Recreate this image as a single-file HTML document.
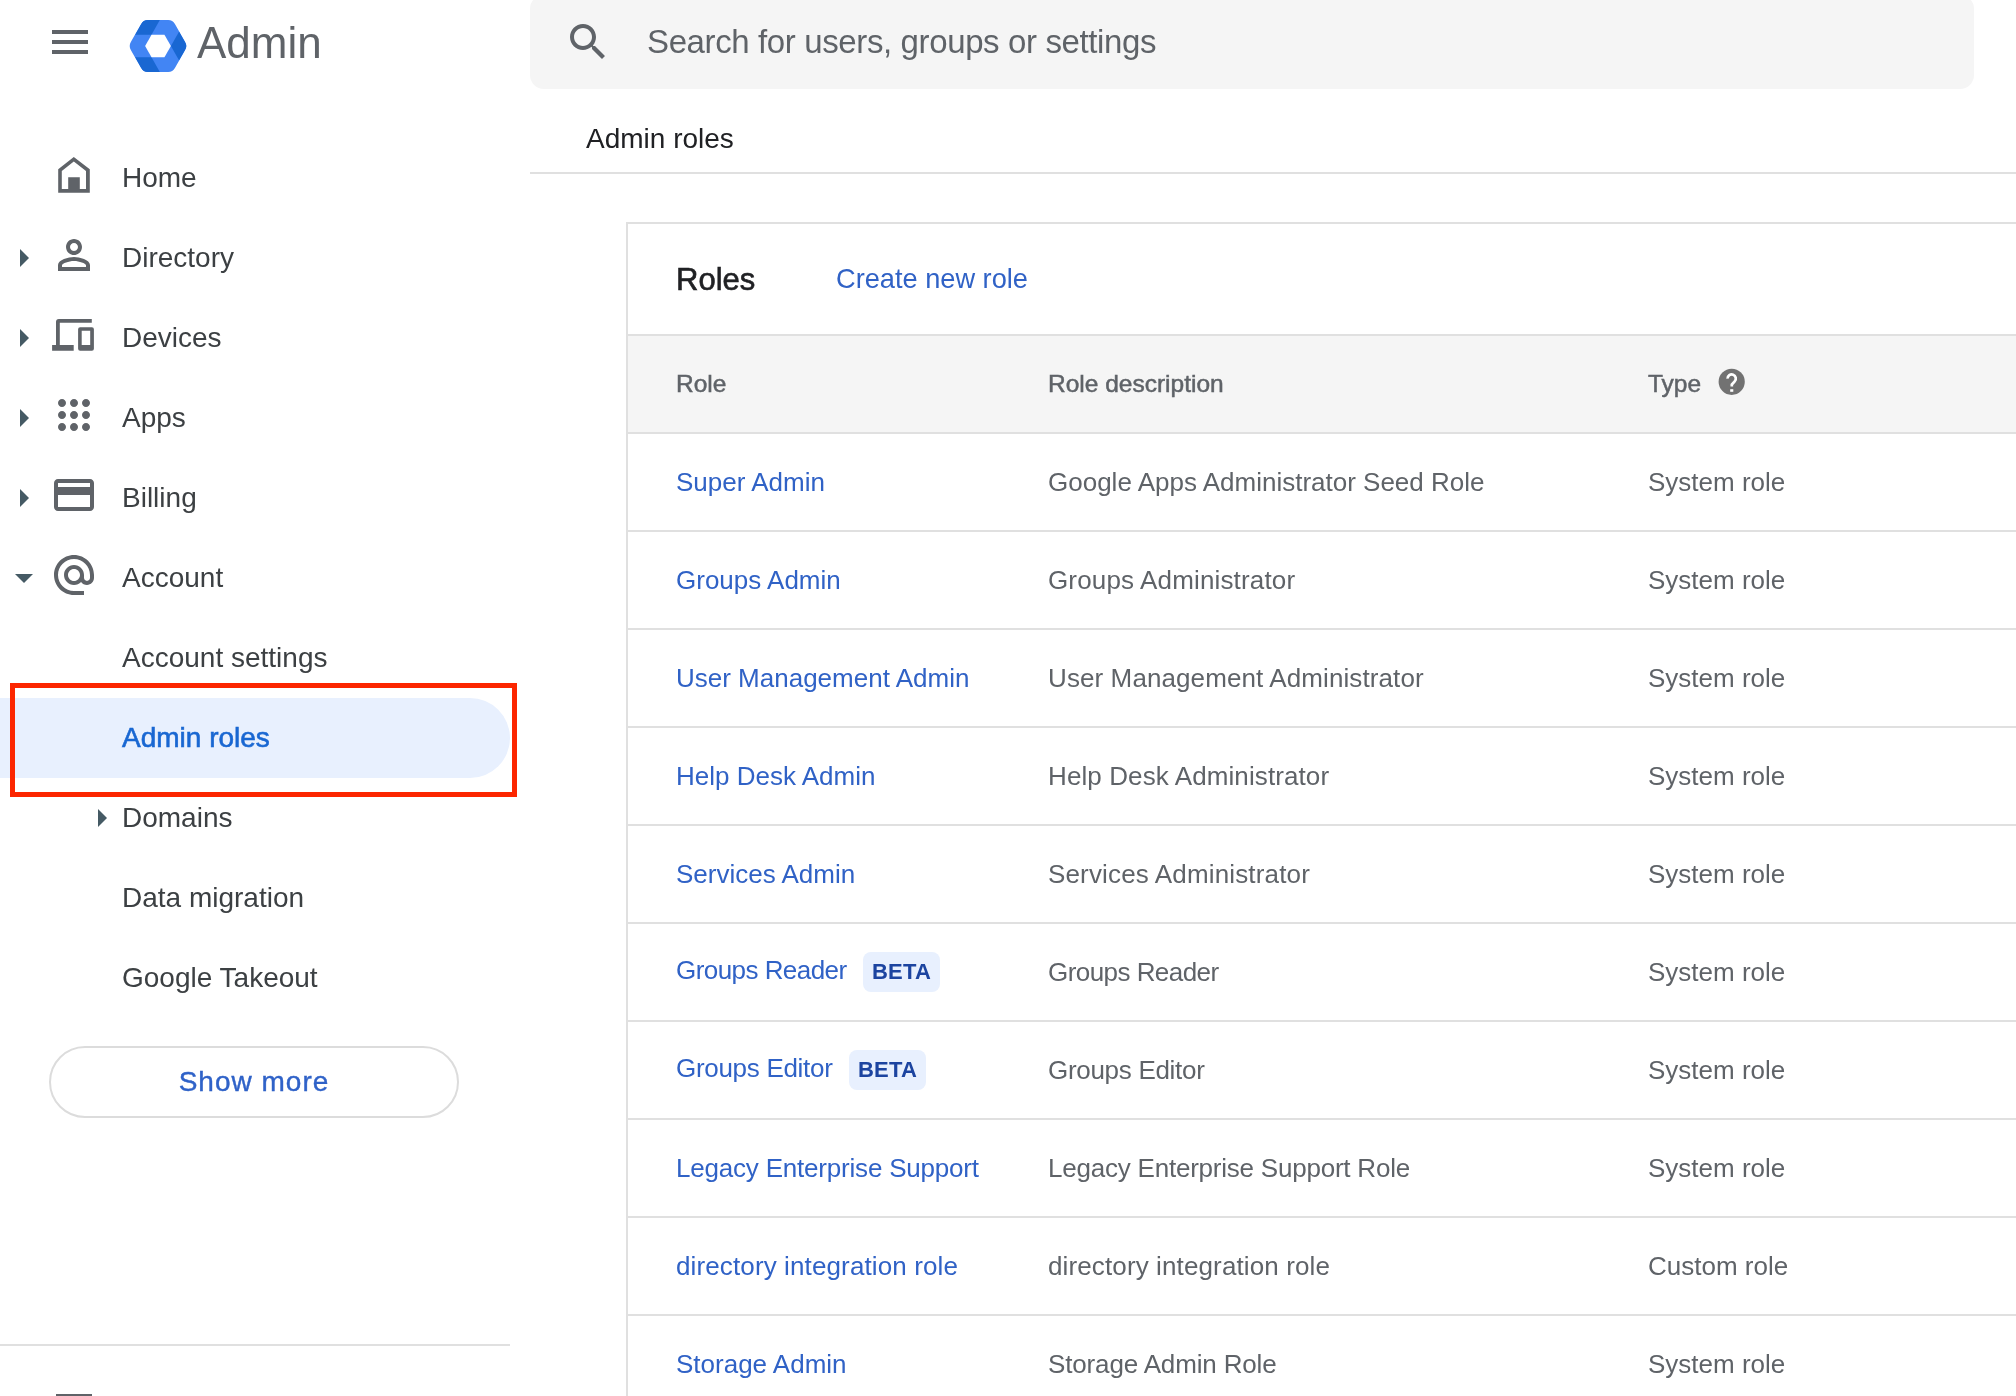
<!DOCTYPE html>
<html><head><meta charset="utf-8">
<style>
*{box-sizing:border-box;margin:0;padding:0}
html,body{width:2016px;height:1396px;overflow:hidden;background:#fff;font-family:"Liberation Sans",sans-serif}
.abs{position:absolute}
.nav{position:absolute;left:0;height:80px;line-height:82px;font-size:28px;color:#3c4043;white-space:nowrap}
.nav .t{position:absolute;left:122px;top:0}
.arr{position:absolute;left:20px;width:0;height:0;border-top:9px solid transparent;border-bottom:9px solid transparent;border-left:9px solid #455a64}
.ico{position:absolute}
.hl{position:absolute;left:0;top:698px;width:510px;height:80px;background:#e8f0fe;border-radius:0 40px 40px 0}
.red{position:absolute;left:10px;top:683px;width:507px;height:114px;border:5px solid #fc2600}
.btn{position:absolute;left:49px;top:1046px;width:410px;height:72px;border:2px solid #dcdcdc;border-radius:36px;text-align:center;line-height:68px;font-size:28px;color:#2f62c8;letter-spacing:1px;-webkit-text-stroke:0.4px #2f62c8}
.search{position:absolute;left:530px;top:-5px;width:1444px;height:94px;background:#f5f5f5;border-radius:14px}
.sph{position:absolute;left:647px;top:0;height:89px;line-height:84px;font-size:33px;letter-spacing:-0.38px;color:#5f6368;white-space:nowrap}
.crumb{position:absolute;left:586px;top:119px;line-height:40px;font-size:28px;color:#202124}
.div1{position:absolute;left:530px;top:172px;width:1486px;height:2px;background:#e0e0e0}
.card{position:absolute;left:626px;top:222px;width:1500px;height:1300px;border:2px solid #e0e0e0;background:#fff}
.roles{position:absolute;left:676px;top:258px;line-height:44px;font-size:31px;color:#202124;-webkit-text-stroke:0.6px #202124}
.create{position:absolute;left:836px;top:259px;line-height:40px;font-size:27.2px;color:#3062c6}
.hdr{position:absolute;left:628px;top:334px;width:1400px;height:100px;background:#f5f5f5;border-top:2px solid #e0e0e0;border-bottom:2px solid #e0e0e0}
.ht{position:absolute;top:364px;line-height:40px;font-size:24.5px;color:#5f6368;-webkit-text-stroke:0.5px #5f6368;white-space:nowrap}
.row{position:absolute;left:628px;width:1400px;height:98px;border-bottom:2px solid #e0e0e0}
.c{position:absolute;line-height:40px;font-size:26px;white-space:nowrap}
.c1{left:676px;color:#3062c6}
.c2{left:1048px;color:#5f6368}
.c3{left:1648px;color:#5f6368}
.beta{position:absolute;width:77px;height:40px;line-height:40px;text-align:center;background:#e8f0fe;color:#1c44a0;font-size:22px;font-weight:bold;border-radius:8px;letter-spacing:0.2px}
</style></head><body><div style="position:absolute;left:0;top:0;width:2016px;height:1396px;will-change:transform">

<!-- hamburger -->
<div class="abs" style="left:52px;top:30px;width:36px;height:4px;background:#5f6368"></div>
<div class="abs" style="left:52px;top:40px;width:36px;height:4px;background:#5f6368"></div>
<div class="abs" style="left:52px;top:50px;width:36px;height:4px;background:#5f6368"></div>

<!-- logo -->
<svg class="abs" style="left:128px;top:19px" width="60" height="54" viewBox="0 0 60 54">
<defs><clipPath id="hx"><path d="M57.18,30.91 Q59.40,27.00 57.18,23.09 L46.92,5.01 Q44.70,1.10 40.20,1.10 L19.80,1.10 Q15.30,1.10 13.08,5.01 L2.82,23.09 Q0.60,27.00 2.82,30.91 L13.08,48.99 Q15.30,52.90 19.80,52.90 L40.20,52.90 Q44.70,52.90 46.92,48.99 Z"/></clipPath></defs>
<g clip-path="url(#hx)"><rect x="0" y="0" width="60" height="54" fill="#4285f4"/>
<polygon points="15.30,1.10 31.80,1.10 23.55,15.64 7.05,15.64" fill="#1967d2"/><polygon points="59.40,27.00 51.15,41.54 42.90,27.00 51.15,12.46" fill="#1967d2"/><polygon points="15.30,52.90 7.05,38.36 23.55,38.36 31.80,52.90" fill="#1967d2"/>
<polygon points="42.90,27.00 36.45,15.64 23.55,15.64 17.10,27.00 23.55,38.36 36.45,38.36" fill="#fff"/></g></svg>
<div class="abs" style="left:197px;top:15px;line-height:56px;font-size:44px;color:#5f6368">Admin</div>

<!-- sidebar nav -->
<div class="nav" style="top:137px"><span class="t">Home</span></div>
<div class="nav" style="top:217px"><span class="t">Directory</span></div>
<div class="nav" style="top:297px"><span class="t">Devices</span></div>
<div class="nav" style="top:377px"><span class="t">Apps</span></div>
<div class="nav" style="top:457px"><span class="t">Billing</span></div>
<div class="nav" style="top:537px"><span class="t">Account</span></div>
<div class="nav" style="top:617px"><span class="t">Account settings</span></div>
<div class="hl"></div>
<div class="nav" style="top:697px;color:#1967d2;-webkit-text-stroke:0.6px #1967d2"><span class="t">Admin roles</span></div>
<div class="red"></div>
<div class="nav" style="top:777px"><span class="t">Domains</span></div>
<div class="nav" style="top:857px"><span class="t">Data migration</span></div>
<div class="nav" style="top:937px"><span class="t">Google Takeout</span></div>

<!-- arrows -->
<div class="arr" style="top:249px"></div>
<div class="arr" style="top:329px"></div>
<div class="arr" style="top:409px"></div>
<div class="arr" style="top:489px"></div>
<div class="abs" style="left:15px;top:574px;width:0;height:0;border-left:9px solid transparent;border-right:9px solid transparent;border-top:9px solid #455a64"></div>
<div class="arr" style="left:98px;top:809px"></div>

<!-- icons -->
<svg class="ico" style="left:50px;top:150px" width="50" height="50" viewBox="0 0 50 50"><path fill="#5f6368" fill-rule="evenodd" d="M8.2,19.3 L23.8,7 L39.8,19.3 V42.8 H8.2 Z M11.8,21.1 V39 H18.2 V27.2 H29.8 V39 H36 V21.1 L23.8,11.6 Z"/></svg>
<svg class="ico" style="left:50px;top:231px" width="48" height="48" viewBox="0 0 24 24"><path fill="#5f6368" d="M12 6c1.1 0 2 .9 2 2s-.9 2-2 2-2-.9-2-2 .9-2 2-2m0 9c2.7 0 5.8 1.29 6 2v1H6v-.99c.2-.72 3.3-2.01 6-2.01m0-11C9.79 4 8 5.79 8 8s1.79 4 4 4 4-1.79 4-4-1.79-4-4-4zm0 9c-2.67 0-8 1.34-8 4v3h16v-3c0-2.66-5.33-4-8-4z"/></svg>
<svg class="ico" style="left:46px;top:312px" width="54" height="46" viewBox="0 0 54 46"><path fill="#5f6368" d="M10,10 Q10,7.1 12.9,7.1 H45.8 V10.7 H13.8 V33.1 H27.7 V38.7 H6.1 V33.1 H10 Z"/><path fill="#5f6368" fill-rule="evenodd" d="M34.1,15.2 H45.9 Q47.9,15.2 47.9,17.2 V36.7 Q47.9,38.7 45.9,38.7 H34.1 Q32.1,38.7 32.1,36.7 V17.2 Q32.1,15.2 34.1,15.2 Z M35.7,18.8 V33.1 H44.2 V18.8 Z"/></svg>
<svg class="ico" style="left:50px;top:391px" width="48" height="48" viewBox="0 0 24 24"><path fill="#5f6368" d="M6 8c1.1 0 2-.9 2-2s-.9-2-2-2-2 .9-2 2 .9 2 2 2zm6 12c1.1 0 2-.9 2-2s-.9-2-2-2-2 .9-2 2 .9 2 2 2zm-6 0c1.1 0 2-.9 2-2s-.9-2-2-2-2 .9-2 2 .9 2 2 2zm0-6c1.1 0 2-.9 2-2s-.9-2-2-2-2 .9-2 2 .9 2 2 2zm6 0c1.1 0 2-.9 2-2s-.9-2-2-2-2 .9-2 2 .9 2 2 2zm4-8c0 1.1.9 2 2 2s2-.9 2-2-.9-2-2-2-2 .9-2 2zm-4 2c1.1 0 2-.9 2-2s-.9-2-2-2-2 .9-2 2 .9 2 2 2zm6 6c1.1 0 2-.9 2-2s-.9-2-2-2-2 .9-2 2 .9 2 2 2zm0 6c1.1 0 2-.9 2-2s-.9-2-2-2-2 .9-2 2 .9 2 2 2z"/></svg>
<svg class="ico" style="left:50px;top:471px" width="48" height="48" viewBox="0 0 24 24"><path fill="#5f6368" d="M20 4H4c-1.11 0-1.99.89-1.99 2L2 18c0 1.11.89 2 2 2h16c1.11 0 2-.89 2-2V6c0-1.11-.89-2-2-2zm0 14H4v-6h16v6zm0-10H4V6h16v2z"/></svg>
<svg class="ico" style="left:50px;top:551px" width="48" height="48" viewBox="0 0 24 24"><path fill="#5f6368" d="M12 2C6.48 2 2 6.48 2 12s4.48 10 10 10h5v-2h-5c-4.34 0-8-3.66-8-8s3.66-8 8-8 8 3.66 8 8v1.43c0 .79-.71 1.57-1.5 1.57s-1.5-.78-1.5-1.57V12c0-2.76-2.24-5-5-5s-5 2.24-5 5 2.24 5 5 5c1.38 0 2.64-.56 3.54-1.47.65.89 1.77 1.47 2.96 1.47 1.97 0 3.5-1.6 3.5-3.57V12c0-5.52-4.48-10-10-10zm0 13c-1.66 0-3-1.34-3-3s1.34-3 3-3 3 1.34 3 3-1.34 3-3 3z"/></svg>

<div class="btn">Show more</div>
<div class="abs" style="left:0;top:1344px;width:510px;height:2px;background:#e0e0e0"></div>
<div class="abs" style="left:56px;top:1394px;width:36px;height:2px;background:#5f6368"></div>

<!-- search -->
<div class="search"></div>
<svg class="abs" style="left:564px;top:18px" width="48" height="48" viewBox="0 0 24 24"><path fill="#5f6368" d="M15.5 14h-.79l-.28-.27C15.41 12.59 16 11.11 16 9.5 16 5.91 13.09 3 9.5 3S3 5.91 3 9.5 5.91 16 9.5 16c1.61 0 3.09-.59 4.23-1.57l.27.28v.79l5 4.99L20.49 19l-4.99-5zm-6 0C7.01 14 5 11.99 5 9.5S7.01 5 9.5 5 14 7.01 14 9.5 11.99 14 9.5 14z"/></svg>
<div class="sph">Search for users, groups or settings</div>

<div class="crumb">Admin roles</div>
<div class="div1"></div>

<!-- card -->
<div class="card"></div>
<div class="roles">Roles</div>
<div class="create">Create new role</div>
<div class="hdr"></div>
<div class="ht" style="left:676px">Role</div>
<div class="ht" style="left:1048px">Role description</div>
<div class="ht" style="left:1648px">Type</div>
<svg class="abs" style="left:1716px;top:366px" width="32" height="32" viewBox="0 0 32 32"><circle cx="15.7" cy="15.85" r="13.1" fill="#727272"/><path d="M11.6,12.6 A4.1,4.1 0 1 1 18.7,15.3 L15.8,18.6 V20.6" fill="none" stroke="#fff" stroke-width="2.7"/><rect x="14.2" y="23.2" width="3.1" height="2.6" fill="#fff"/></svg>

<!--ROWS-->
<div class="row" style="top:434px"></div>
<div class="c c1" style="top:462px">Super Admin</div><div class="c c2" style="top:462px">Google Apps Administrator Seed Role</div><div class="c c3" style="top:462px">System role</div>
<div class="row" style="top:532px"></div>
<div class="c c1" style="top:560px">Groups Admin</div><div class="c c2" style="top:560px;letter-spacing:0.15px">Groups Administrator</div><div class="c c3" style="top:560px">System role</div>
<div class="row" style="top:630px"></div>
<div class="c c1" style="top:658px">User Management Admin</div><div class="c c2" style="top:658px;letter-spacing:0.1px">User Management Administrator</div><div class="c c3" style="top:658px">System role</div>
<div class="row" style="top:728px"></div>
<div class="c c1" style="top:756px">Help Desk Admin</div><div class="c c2" style="top:756px;letter-spacing:0.1px">Help Desk Administrator</div><div class="c c3" style="top:756px">System role</div>
<div class="row" style="top:826px"></div>
<div class="c c1" style="top:854px">Services Admin</div><div class="c c2" style="top:854px;letter-spacing:0.15px">Services Administrator</div><div class="c c3" style="top:854px">System role</div>
<div class="row" style="top:924px"></div>
<div class="c c1" style="top:950px;letter-spacing:-0.55px">Groups Reader</div><div class="c c2" style="top:952px;letter-spacing:-0.55px">Groups Reader</div><div class="c c3" style="top:952px">System role</div>
<div class="beta" style="left:863px;top:952px">BETA</div>
<div class="row" style="top:1022px"></div>
<div class="c c1" style="top:1048px;letter-spacing:-0.3px">Groups Editor</div><div class="c c2" style="top:1050px;letter-spacing:-0.3px">Groups Editor</div><div class="c c3" style="top:1050px">System role</div>
<div class="beta" style="left:849px;top:1050px">BETA</div>
<div class="row" style="top:1120px"></div>
<div class="c c1" style="top:1148px;letter-spacing:-0.2px">Legacy Enterprise Support</div><div class="c c2" style="top:1148px;letter-spacing:-0.22px">Legacy Enterprise Support Role</div><div class="c c3" style="top:1148px">System role</div>
<div class="row" style="top:1218px"></div>
<div class="c c1" style="top:1246px;letter-spacing:0.12px">directory integration role</div><div class="c c2" style="top:1246px;letter-spacing:0.12px">directory integration role</div><div class="c c3" style="top:1246px">Custom role</div>
<div class="row" style="top:1316px"></div>
<div class="c c1" style="top:1344px">Storage Admin</div><div class="c c2" style="top:1344px;letter-spacing:-0.15px">Storage Admin Role</div><div class="c c3" style="top:1344px">System role</div>
<!--/ROWS-->
</div></body></html>
